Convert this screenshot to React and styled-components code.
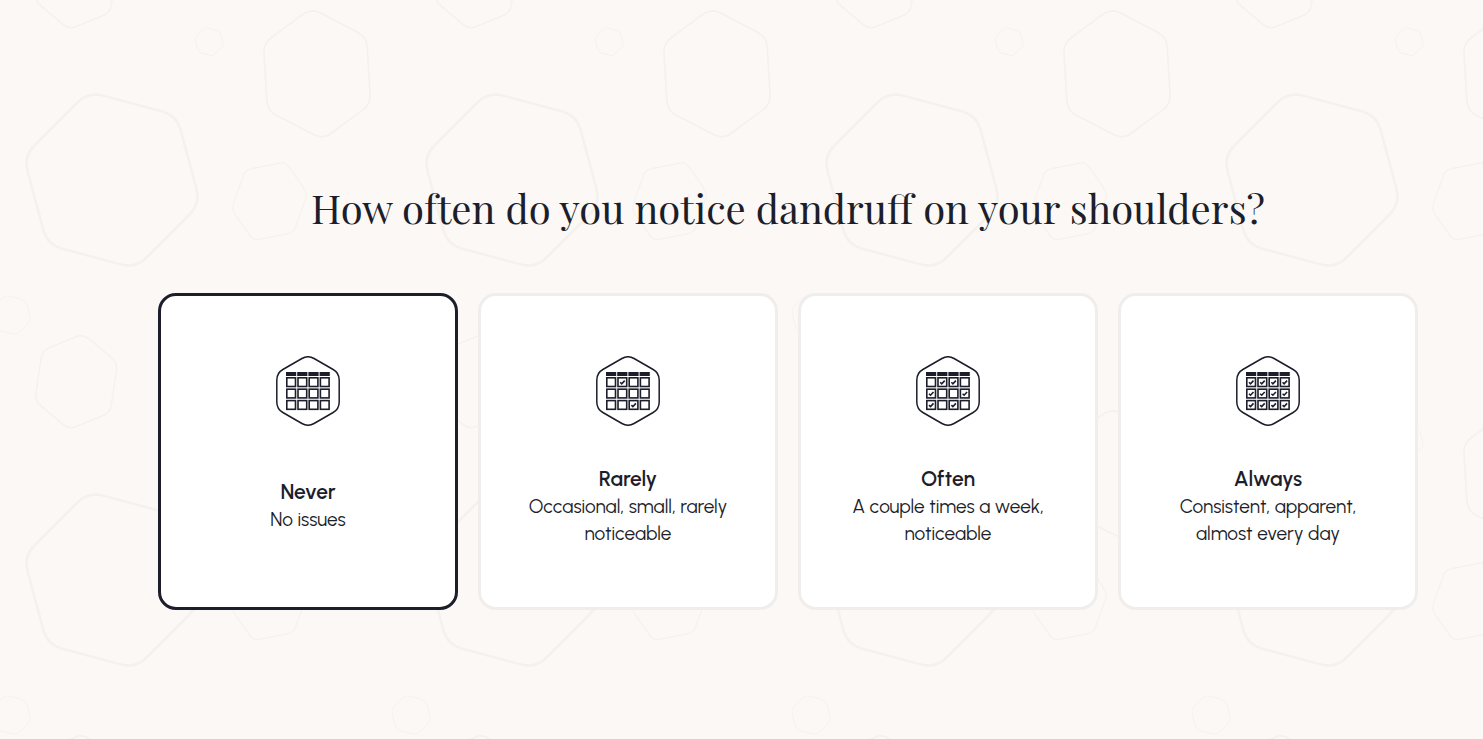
import React, { useState } from "react";
import styled, { createGlobalStyle } from "styled-components";

// every hexagon is symmetric, so 3 corners are enough and the other 3 are mirrored
const hexPath = (cx, cy, half, round) => {
  const pts = [...half, ...half.map(([x, y]) => [-x, -y])].map(([x, y]) => [
    cx + x,
    cy + y,
  ]);
  const towards = (a, b) => {
    const len = Math.hypot(b[0] - a[0], b[1] - a[1]);
    const x = a[0] + ((b[0] - a[0]) * round) / len;
    const y = a[1] + ((b[1] - a[1]) * round) / len;
    return `${x.toFixed(2)} ${y.toFixed(2)}`;
  };
  return (
    pts
      .map((p, i) => {
        const prev = pts[(i + 5) % 6];
        const next = pts[(i + 1) % 6];
        return `${i ? "L" : "M"}${towards(p, prev)}Q${p[0]} ${p[1]} ${towards(p, next)}`;
      })
      .join("") + "Z"
  );
};

const regular = (r) =>
  [-105, -45, 15].map((deg) => {
    const a = (deg * Math.PI) / 180;
    return [r * Math.cos(a), r * Math.sin(a)];
  });

const tilted = [[7, -47.8], [41.4, -19], [34, 31]];

const hexagons = [
  { d: hexPath(112, 180, regular(91.5), 15), w: 2.6 },
  { d: hexPath(317, 73.8, [[-5.9, -65.6], [49.6, -36.8], [53.6, 30.4]], 10), w: 1.8 },
  { d: hexPath(209.2, 41.7, regular(15), 3), w: 1 },
  { d: hexPath(269.5, 201.3, [[16, -39.3], [38, -8], [24, 31.5]], 6), w: 1.2 },
  { d: hexPath(11, 315, regular(20.7), 4), w: 1 },
  { d: hexPath(411, 315, regular(20.7), 4), w: 1 },
  { d: hexPath(76.2, 381.7, tilted, 8), w: 1.4 },
  { d: hexPath(76.2, -18.3, tilted, 8), w: 1.4 },
];

const tile = `<svg xmlns="http://www.w3.org/2000/svg" width="400" height="400" fill="none" stroke="#f5f1ee">${hexagons
  .map((h) => `<path d="${h.d}" stroke-width="${h.w}"/>`)
  .join("")}</svg>`;

const options = [
  { id: "never", title: "Never", text: "No issues", checks: [] },
  {
    id: "rarely",
    title: "Rarely",
    text: "Occasional, small, rarely noticeable",
    checks: [1, 10],
  },
  {
    id: "often",
    title: "Often",
    text: "A couple times a week, noticeable",
    checks: [1, 2, 4, 7, 8, 10],
  },
  {
    id: "always",
    title: "Always",
    text: "Consistent, apparent, almost every day",
    checks: [0, 1, 2, 3, 4, 5, 6, 7, 8, 9, 10, 11],
  },
];

const columns = [10, 21.2, 32.4, 43.6];
const rows = [21, 32.4, 43.8];

const CalendarIcon = ({ checks }) => {
  return (
    <Icon viewBox="0 0 64 70" aria-hidden="true">
      <path
        d={hexPath(32, 35, [[0, -36], [31.2, -18], [31.2, 18]], 7)}
        strokeWidth="1.5"
      />
      {columns.map((x) => (
        <rect key={x} x={x} y="16" width="10.2" height="4" fill="#1c1e2b" stroke="none" />
      ))}
      {rows.map((y, r) =>
        columns.map((x, c) => (
          <g key={`${r}-${c}`}>
            <rect x={x + 0.8} y={y + 0.8} width="8.7" height="8.7" strokeWidth="1.6" />
            {checks.includes(r * 4 + c) && (
              <path
                d={`M${x + 3} ${y + 5.3}l1.5 1.5l3-3.2`}
                strokeWidth="1.6"
              />
            )}
          </g>
        ))
      )}
    </Icon>
  );
};

const App = () => {
  const [selected, setSelected] = useState("never");

  return (
    <>
      <GlobalStyle />
      <Page>
        <Question id="question">
          How often do you notice dandruff on your shoulders?
        </Question>
        <Options role="radiogroup" aria-labelledby="question">
          {options.map((option) => (
            <Card key={option.id} $active={selected === option.id}>
              <Radio
                type="radio"
                name="dandruff"
                value={option.id}
                checked={selected === option.id}
                onChange={() => setSelected(option.id)}
              />
              <CalendarIcon checks={option.checks} />
              <CardText>
                <Title>{option.title}</Title>
                <Description>{option.text}</Description>
              </CardText>
            </Card>
          ))}
        </Options>
      </Page>
    </>
  );
};

export default App;

const GlobalStyle = createGlobalStyle`
  * {
    box-sizing: border-box;
  }

  body {
    margin: 0;
    color: #1c1e2b;
    background-color: #fcf8f5;
    background-image: url("data:image/svg+xml,${encodeURIComponent(tile)}");
    font-family: "Sofia Pro", Urbanist, Lato, sans-serif;
  }
`;

const Page = styled.main`
  display: flex;
  flex-direction: column;
  align-items: center;
  gap: 58px;
  min-height: 100vh;
  padding: 181px 0 40px 93px;
`;

const Question = styled.h1`
  margin: 0;
  font-family: "Playfair Display", "Liberation Serif", serif;
  font-size: 40px;
  font-weight: 400;
  line-height: 54px;
  text-align: center;
`;

const Options = styled.div`
  display: grid;
  grid-template-columns: repeat(4, 1fr);
  gap: 20px;
  width: 100%;
  max-width: 1260px;
`;

const Card = styled.label`
  display: flex;
  flex-direction: column;
  align-items: center;
  min-height: 317px;
  padding: 60px 36px 22px;
  background-color: white;
  border: 3px solid ${({ $active }) => ($active ? "#1c1e2b" : "#f0edeb")};
  border-radius: 18px;
  text-align: center;
  cursor: pointer;
`;

const Radio = styled.input`
  position: absolute;
  opacity: 0;
  pointer-events: none;
`;

const Icon = styled.svg`
  width: 64px;
  height: 70px;
  flex-shrink: 0;
  fill: none;
  stroke: #1c1e2b;
`;

const CardText = styled.span`
  display: flex;
  flex: 1;
  flex-direction: column;
  justify-content: center;
`;

const Title = styled.span`
  font-size: 21px;
  font-weight: 600;
  line-height: 28px;
`;

const Description = styled.span`
  font-size: 19px;
  font-weight: 400;
  line-height: 27px;
`;
